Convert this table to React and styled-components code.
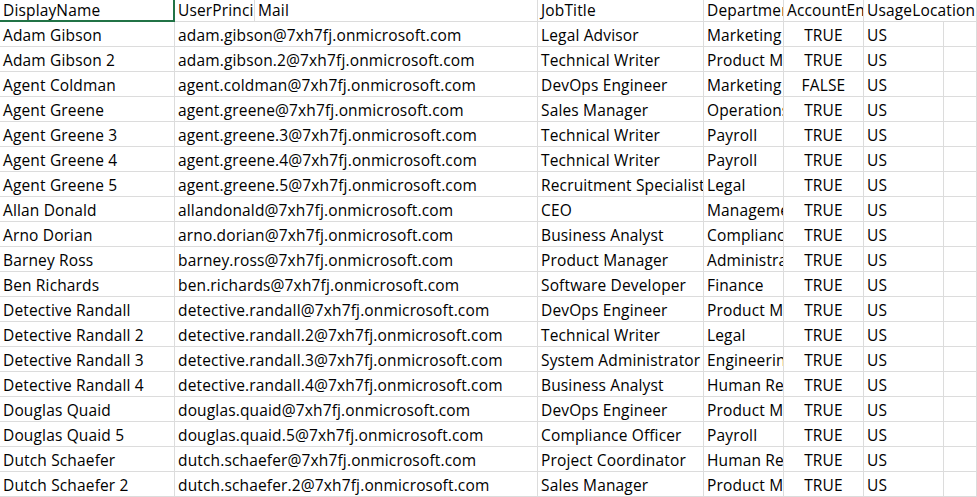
import React from 'react';
import styled, { createGlobalStyle } from 'styled-components';

const GlobalStyle = createGlobalStyle`
  html, body {
    margin: 0;
    padding: 0;
    background: #ffffff;
    overflow: hidden;
  }
  * {
    box-sizing: border-box;
  }
`;

const columns = '175px 80px 283px 166px 80px 80px 80px 1fr';

const Sheet = styled.div`
  width: 977px;
  height: 497px;
  overflow: hidden;
  font-family: 'Open Sans', 'Liberation Sans', sans-serif;
  font-size: 15.5px;
  letter-spacing: 0.15px;
  color: #000000;
`;

const Row = styled.div`
  display: grid;
  grid-template-columns: ${columns};
  height: 25px;
  margin-top: ${(p) => (p.$first ? '-3px' : '0')};
`;

const Cell = styled.div`
  grid-column: span ${(p) => p.$span || 1};
  height: 25px;
  padding: 1px 3px 0 3px;
  line-height: 24px;
  white-space: nowrap;
  overflow: hidden;
  text-align: ${(p) => p.$align || 'left'};
  border-right: ${(p) => (p.$selected ? '2px solid #217346' : '1px solid #dcdcdc')};
  border-bottom: ${(p) => (p.$selected ? '2px solid #217346' : '1px solid #dcdcdc')};
`;

const headers = ['DisplayName', 'UserPrincipalName', 'Mail', 'JobTitle', 'Department', 'AccountEnabled'];

const users = [
  ['Adam Gibson', 'adam.gibson@7xh7fj.onmicrosoft.com', 'Legal Advisor', 'Marketing', true],
  ['Adam Gibson 2', 'adam.gibson.2@7xh7fj.onmicrosoft.com', 'Technical Writer', 'Product Management', true],
  ['Agent Coldman', 'agent.coldman@7xh7fj.onmicrosoft.com', 'DevOps Engineer', 'Marketing', false],
  ['Agent Greene', 'agent.greene@7xh7fj.onmicrosoft.com', 'Sales Manager', 'Operations', true],
  ['Agent Greene 3', 'agent.greene.3@7xh7fj.onmicrosoft.com', 'Technical Writer', 'Payroll', true],
  ['Agent Greene 4', 'agent.greene.4@7xh7fj.onmicrosoft.com', 'Technical Writer', 'Payroll', true],
  ['Agent Greene 5', 'agent.greene.5@7xh7fj.onmicrosoft.com', 'Recruitment Specialist', 'Legal', true],
  ['Allan Donald', 'allandonald@7xh7fj.onmicrosoft.com', 'CEO', 'Management', true],
  ['Arno Dorian', 'arno.dorian@7xh7fj.onmicrosoft.com', 'Business Analyst', 'Compliance', true],
  ['Barney Ross', 'barney.ross@7xh7fj.onmicrosoft.com', 'Product Manager', 'Administration', true],
  ['Ben Richards', 'ben.richards@7xh7fj.onmicrosoft.com', 'Software Developer', 'Finance', true],
  ['Detective Randall', 'detective.randall@7xh7fj.onmicrosoft.com', 'DevOps Engineer', 'Product Management', true],
  ['Detective Randall 2', 'detective.randall.2@7xh7fj.onmicrosoft.com', 'Technical Writer', 'Legal', true],
  ['Detective Randall 3', 'detective.randall.3@7xh7fj.onmicrosoft.com', 'System Administrator', 'Engineering', true],
  ['Detective Randall 4', 'detective.randall.4@7xh7fj.onmicrosoft.com', 'Business Analyst', 'Human Resources', true],
  ['Douglas Quaid', 'douglas.quaid@7xh7fj.onmicrosoft.com', 'DevOps Engineer', 'Product Management', true],
  ['Douglas Quaid 5', 'douglas.quaid.5@7xh7fj.onmicrosoft.com', 'Compliance Officer', 'Payroll', true],
  ['Dutch Schaefer', 'dutch.schaefer@7xh7fj.onmicrosoft.com', 'Project Coordinator', 'Human Resources', true],
  ['Dutch Schaefer 2', 'dutch.schaefer.2@7xh7fj.onmicrosoft.com', 'Sales Manager', 'Product Management', true],
];

export default function App() {
  return (
    <>
      <GlobalStyle />
      <Sheet>
        <Row $first>
          {headers.map((h, i) => (
            <Cell key={h} $selected={i === 0}>{h}</Cell>
          ))}
          {/* UsageLocation spills into the empty column next to it */}
          <Cell $span={2}>UsageLocation</Cell>
        </Row>
        {users.map(([name, upn, job, dept, enabled]) => (
          <Row key={upn}>
            <Cell>{name}</Cell>
            <Cell $span={2}>{upn}</Cell>
            <Cell>{job}</Cell>
            <Cell>{dept}</Cell>
            <Cell $align="center">{enabled ? 'TRUE' : 'FALSE'}</Cell>
            <Cell>US</Cell>
            <Cell />
          </Row>
        ))}
      </Sheet>
    </>
  );
}
